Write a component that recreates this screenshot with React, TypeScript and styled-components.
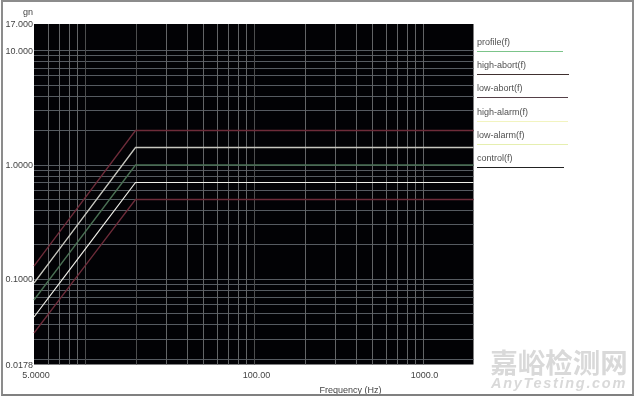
import styled, { createGlobalStyle } from 'styled-components';

const GlobalStyle = createGlobalStyle`
   html, body {
      margin: 0;
      background: #fefefe;
   }
`;

const PLOT = { left: 34, right: 473.5, top: 24, bottom: 364.5 };

const toX = (hz: number) => 85 + 169 * (Math.log10(hz) - 1);
const toY = (gn: number) => 164.5 - 114.4 * Math.log10(gn);
const snap = (value: number) => Math.round(value) + 0.5;

const decades = (from: number, to: number) => {
   const values: number[] = [];
   for (let exp = from; exp <= to; exp++) {
      for (let n = 1; n <= 9; n++) values.push(n * 10 ** exp);
   }
   return values;
};

const verticals = decades(0, 3).filter((hz) => hz > 5 && hz < 2000);
const horizontals = decades(-2, 1).filter((gn) => gn > 0.0178 && gn <= 10);

const curves = [
   { name: 'high-abort', color: '#6e2c3a', width: 1.3, leftY: 266, flatY: 130.5 },
   { name: 'high-alarm', color: '#c8c8c0', width: 1.3, leftY: 283, flatY: 147.5 },
   { name: 'profile', color: '#4a7054', width: 1.4, leftY: 300, flatY: 165 },
   { name: 'low-alarm', color: '#f0f0ea', width: 1.2, leftY: 317, flatY: 182.5 },
   { name: 'low-abort', color: '#6e2c3a', width: 1.3, leftY: 333, flatY: 199.5 },
];

const yTicks = [
   { label: '17.000', y: 27 },
   { label: '10.000', y: 53.5 },
   { label: '1.0000', y: 167.5 },
   { label: '0.1000', y: 281.5 },
   { label: '0.0178', y: 367.5 },
];

const xTicks = [
   { label: '5.0000', x: 36 },
   { label: '100.00', x: 256.5 },
   { label: '1000.0', x: 424.5 },
];

const legend = [
   { label: 'profile(f)', color: '#7cc48a', width: 86 },
   { label: 'high-abort(f)', color: '#40302f', width: 92 },
   { label: 'low-abort(f)', color: '#554048', width: 91 },
   { label: 'high-alarm(f)', color: '#f2f4c0', width: 91 },
   { label: 'low-alarm(f)', color: '#e6efb0', width: 91 },
   { label: 'control(f)', color: '#222222', width: 87 },
];

const Chart = () => (
   <PlotSvg width={474} height={394} viewBox='0 0 474 394'>
      <rect x={PLOT.left} y={PLOT.top} width={PLOT.right - PLOT.left} height={PLOT.bottom - PLOT.top} fill='#020205' />
      {horizontals.map((gn) => (
         <line
            key={gn}
            x1={PLOT.left}
            x2={PLOT.right}
            y1={snap(toY(gn))}
            y2={snap(toY(gn))}
            stroke='#565b61'
         />
      ))}
      {verticals.map((hz) => (
         <line
            key={hz}
            x1={snap(toX(hz))}
            x2={snap(toX(hz))}
            y1={PLOT.top}
            y2={PLOT.bottom}
            stroke={hz === 10 || hz === 20 || hz === 100 ? '#4c4d4e' : '#626466'}
         />
      ))}
      {curves.map((curve) => (
         <polyline
            key={curve.name}
            points={`${PLOT.left},${curve.leftY} 135.5,${curve.flatY} ${PLOT.right},${curve.flatY}`}
            fill='none'
            stroke={curve.color}
            strokeWidth={curve.width}
         />
      ))}
      <AxisText x={33} y={15}>gn</AxisText>
      {yTicks.map((tick) => (
         <AxisText key={tick.label} x={33} y={tick.y}>
            {tick.label}
         </AxisText>
      ))}
      {xTicks.map((tick) => (
         <AxisText key={tick.label} x={tick.x} y={378} textAnchor='middle'>
            {tick.label}
         </AxisText>
      ))}
      <AxisText x={350.5} y={393} textAnchor='middle'>
         Frequency (Hz)
      </AxisText>
   </PlotSvg>
);

const App = () => (
   <>
      <GlobalStyle />
      <Frame>
         <Chart />
         <Legend>
            {legend.map((item) => (
               <LegendRow key={item.label} $color={item.color} $width={item.width}>
                  {item.label}
               </LegendRow>
            ))}
         </Legend>
         <Watermark>
            <WatermarkTitle>嘉峪检测网</WatermarkTitle>
            <WatermarkUrl>AnyTesting.com</WatermarkUrl>
         </Watermark>
      </Frame>
   </>
);

const Frame = styled.div`
   position: relative;
   box-sizing: border-box;
   display: flex;
   align-items: flex-start;
   width: 633px;
   height: 396px;
   margin: 0 0 0 1px;
   border: 2px solid #8c8c8c;
   border-bottom-color: #808080;
   background: #ffffff;
   filter: blur(0.3px);
`;

const PlotSvg = styled.svg`
   flex: none;
   margin: -2px 0 0 -3px;
   font-family: 'Liberation Sans', Arial, sans-serif;
`;

const AxisText = styled.text`
   font-size: 9px;
   fill: #444444;
   text-anchor: ${(props) => props.textAnchor ?? 'end'};
`;

const Legend = styled.div`
   display: flex;
   flex-direction: column;
   gap: 7.2px;
   padding: 34px 0 0 3px;
   font-family: 'Liberation Sans', Arial, sans-serif;
`;

const LegendRow = styled.div<{ $color: string; $width: number }>`
   box-sizing: border-box;
   width: ${(props) => props.$width}px;
   height: 16px;
   padding-top: 1px;
   border-bottom: 1px solid ${(props) => props.$color};
   font-size: 9px;
   line-height: 11px;
   color: #505050;
`;

const Watermark = styled.div`
   position: absolute;
   right: 3px;
   bottom: 3px;
   width: 140px;
   display: flex;
   flex-direction: column;
   align-items: center;
   color: #d9d9d9;
`;

const WatermarkTitle = styled.div`
   font-family: 'Noto Sans CJK SC', sans-serif;
   font-size: 27.5px;
   font-weight: 700;
   line-height: 28px;
`;

const WatermarkUrl = styled.div`
   font-family: 'Liberation Sans', Arial, sans-serif;
   font-size: 14.5px;
   font-weight: 700;
   font-style: italic;
   letter-spacing: 1.7px;
   line-height: 16px;
`;

export default App;
